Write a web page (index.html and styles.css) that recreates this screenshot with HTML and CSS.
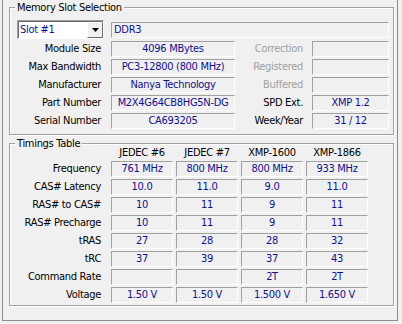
FILE: index.html
```html
<!DOCTYPE html>
<html lang="en">
<head>
  <meta charset="UTF-8">
  <title>SPD</title>
  <link rel="stylesheet" href="styles.css">
</head>
<body>

<div class="tab">

  <div class="group slot-group">
    <span class="group-title">Memory Slot Selection</span>
    <div class="slot-grid">
      <div class="combo">
        <span class="combo-text">Slot #1</span>
        <span class="combo-btn">
          <svg width="7" height="4" viewBox="0 0 7 4"><polygon points="0,0 7,0 3.5,4" fill="#000"/></svg>
        </span>
      </div>
      <div class="field wide">DDR3</div>

      <div class="label">Module Size</div>
      <div class="field">4096 MBytes</div>
      <div class="label dim">Correction</div>
      <div class="field"></div>

      <div class="label">Max Bandwidth</div>
      <div class="field">PC3-12800 (800 MHz)</div>
      <div class="label dim">Registered</div>
      <div class="field"></div>

      <div class="label">Manufacturer</div>
      <div class="field">Nanya Technology</div>
      <div class="label dim">Buffered</div>
      <div class="field"></div>

      <div class="label">Part Number</div>
      <div class="field">M2X4G64CB8HG5N-DG</div>
      <div class="label right">SPD Ext.</div>
      <div class="field">XMP 1.2</div>

      <div class="label">Serial Number</div>
      <div class="field">CA693205</div>
      <div class="label right">Week/Year</div>
      <div class="field">31 / 12</div>
    </div>
  </div>

  <div class="group timing-group">
    <span class="group-title">Timings Table</span>
    <div class="timing-grid">
      <div></div>
      <div class="head">JEDEC #6</div>
      <div class="head">JEDEC #7</div>
      <div class="head">XMP-1600</div>
      <div class="head">XMP-1866</div>

      <div class="label">Frequency</div>
      <div class="field">761 MHz</div>
      <div class="field">800 MHz</div>
      <div class="field">800 MHz</div>
      <div class="field">933 MHz</div>

      <div class="label">CAS# Latency</div>
      <div class="field">10.0</div>
      <div class="field">11.0</div>
      <div class="field">9.0</div>
      <div class="field">11.0</div>

      <div class="label">RAS# to CAS#</div>
      <div class="field">10</div>
      <div class="field">11</div>
      <div class="field">9</div>
      <div class="field">11</div>

      <div class="label">RAS# Precharge</div>
      <div class="field">10</div>
      <div class="field">11</div>
      <div class="field">9</div>
      <div class="field">11</div>

      <div class="label">tRAS</div>
      <div class="field">27</div>
      <div class="field">28</div>
      <div class="field">28</div>
      <div class="field">32</div>

      <div class="label">tRC</div>
      <div class="field">37</div>
      <div class="field">39</div>
      <div class="field">37</div>
      <div class="field">43</div>

      <div class="label">Command Rate</div>
      <div class="field"></div>
      <div class="field"></div>
      <div class="field">2T</div>
      <div class="field">2T</div>

      <div class="label">Voltage</div>
      <div class="field">1.50 V</div>
      <div class="field">1.50 V</div>
      <div class="field">1.500 V</div>
      <div class="field">1.650 V</div>
    </div>
  </div>

</div>

</body>
</html>
```

FILE: styles.css
```css
body {
  margin: 0;
  background-color: #f0f0f0;
  font-family: "DejaVu Sans Condensed", "Liberation Sans", sans-serif;
  font-size: 11px;
  letter-spacing: -0.3px;
  color: #000;
  overflow: hidden;
}
.tab {
  box-sizing: border-box;
  width: 396px;
  height: 321px;
  margin-left: 2px;
  padding: 7px 0 0 6px;
  border: 1px solid #8c8c8c;
  border-top: none;
}
.group {
  position: relative;
  box-sizing: border-box;
  width: 385px;
  border: 1px solid #a0a0a0;
  box-shadow: inset 1px 1px 0 #fff, 1px 1px 0 #fff;
}
.slot-group {
  height: 128px;
  padding: 12px 0 5px;
}
.timing-group {
  height: 163px;
  margin-top: 8px;
  padding: 0 0 2px;
}
.group-title {
  position: absolute;
  top: -7px;
  left: 5px;
  padding: 0 2px;
  line-height: 13px;
  background-color: #f0f0f0;
}
.slot-grid {
  display: grid;
  grid-template-columns: 101px 124px 77px 77px;
  grid-template-rows: 19px repeat(5, 16px);
  row-gap: 2px;
}
.timing-grid {
  display: grid;
  grid-template-columns: 98px repeat(4, 62px);
  grid-template-rows: 15px repeat(8, 16px);
  column-gap: 3px;
  row-gap: 2px;
}
.label {
  text-align: right;
  padding-right: 10px;
  line-height: 16px;
  white-space: nowrap;
}
.slot-grid .label.dim,
.slot-grid .label.right {
  padding-right: 9px;
}
.label.dim {
  color: #a0a0a0;
}
.timing-grid .label {
  padding-right: 7px;
}
.head {
  text-align: center;
  padding-top: 2px;
  line-height: 13px;
  white-space: nowrap;
}
.field {
  box-sizing: border-box;
  height: 16px;
  border: 1px solid;
  border-color: #a0a0a0 #fff #fff #a0a0a0;
  color: #10108c;
  text-align: center;
  line-height: 14px;
  white-space: nowrap;
  overflow: hidden;
}
.field.wide {
  grid-column: 2 / 5;
  align-self: center;
  text-align: left;
  padding-left: 2px;
}
.combo {
  box-sizing: border-box;
  width: 87px;
  height: 19px;
  margin-left: 7px;
  display: flex;
  align-items: center;
  justify-content: space-between;
  padding-left: 2px;
  background-color: #fff;
  border: 1px solid;
  border-color: #a0a0a0 #fff #fff #a0a0a0;
  box-shadow: inset 1px 1px 0 #696969;
  color: #10108c;
}
.combo-btn {
  box-sizing: border-box;
  width: 16px;
  height: 16px;
  margin-top: 1px;
  display: flex;
  align-items: center;
  justify-content: center;
  background-color: #f0f0f0;
  border: 1px solid;
  border-color: #fff #696969 #696969 #fff;
}
```
